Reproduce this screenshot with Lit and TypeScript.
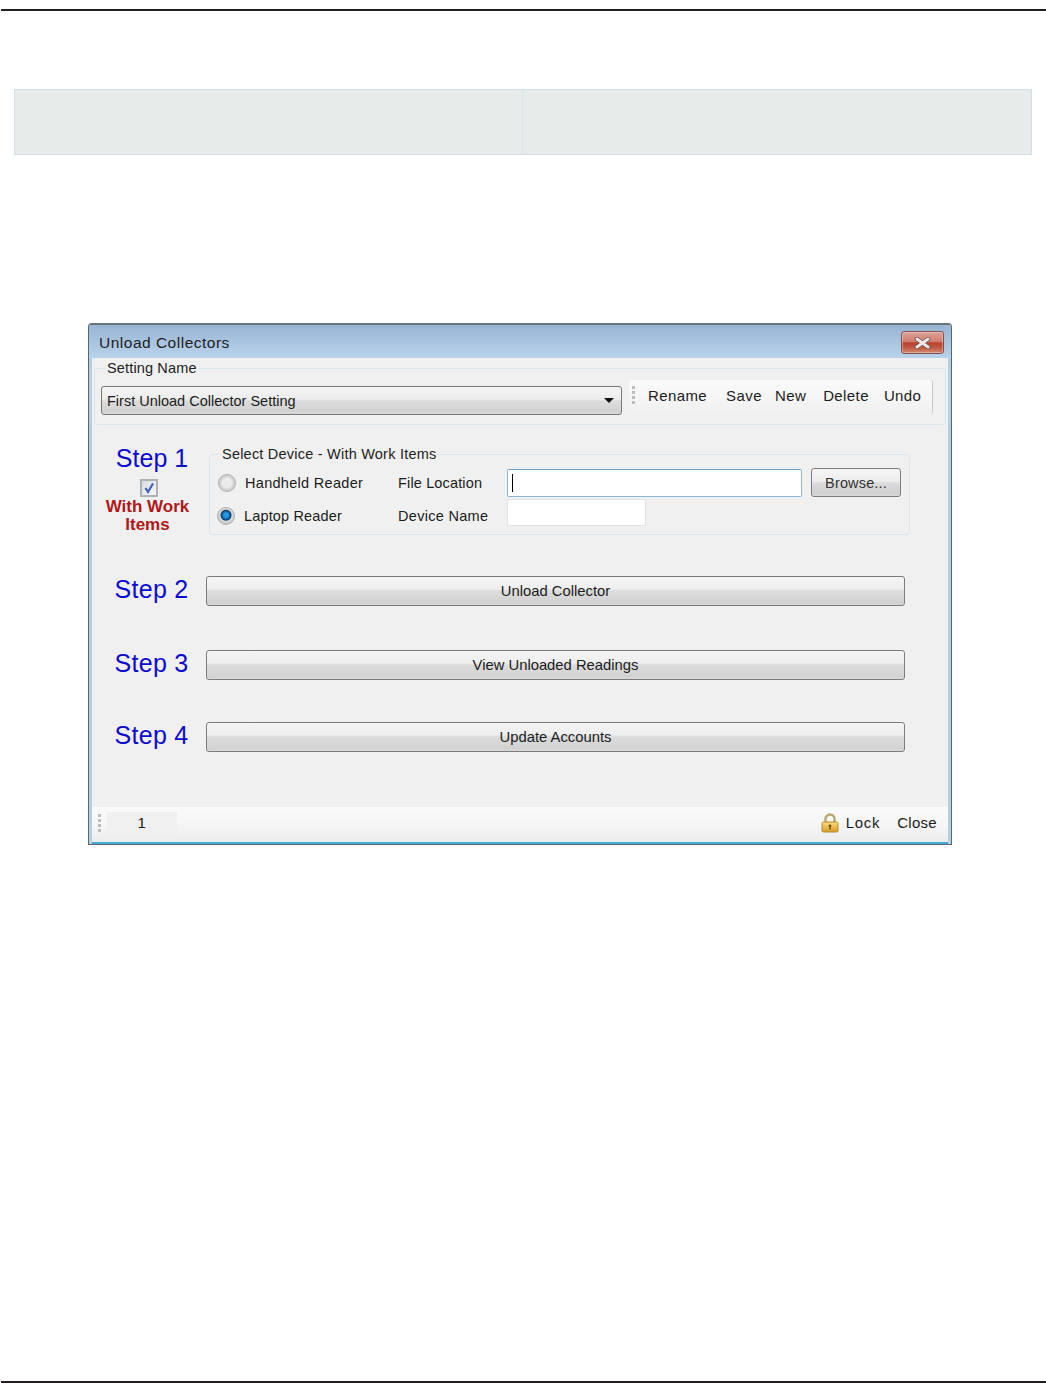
import { LitElement, html, css } from "lit";
import { customElement } from "lit/decorators.js";

@customElement("app-root")
export class AppRoot extends LitElement {
  static styles = css`
    :host { display: block; height: 1383px; background: #fff; overflow: hidden; font-family: "Liberation Sans", Arial, sans-serif; }
    * { box-sizing: border-box; }
    .rule { height: 2px; background: #231f20; margin-left: 1px; }
    .rule.top { margin-top: 9px; }
    .rule.bottom { margin-top: 536px; }
    .table { margin: 78px 0 0 14px; width: 1018px; height: 66px; display: grid; grid-template-columns: 507px 509px; background: #e7ebea; border: 1px solid #cfe0ec; }
    .table div + div { border-left: 1px solid #d6e4ee; }

    .win { margin: 168px 0 0 88px; width: 864px; height: 522px; display: flex; flex-direction: column; background: #f0f0f0; border: 1px solid #5b6570; border-top: 2px solid #6b7580; border-radius: 4px 4px 0 0; color: #1c1c1c; font-size: 14.5px; letter-spacing: 0.15px; box-shadow: inset 3px 0 0 #b4cfe8, inset -3px 0 0 #b4cfe8, inset 0 -2px 0 #3fb0d0; padding: 0 3px 2px; }
    .title { margin: 0 -3px; height: 33px; flex: none; display: flex; align-items: center; justify-content: space-between; padding: 2px 7px 0 10px; background: linear-gradient(#98b4d3, #b9d3eb); font-size: 15.5px; letter-spacing: 0.5px; color: #222; }
    .x { width: 43px; height: 23px; border: 1px solid #84504e; border-radius: 3px; background: linear-gradient(#dfa298 0%, #d0806f 45%, #b9432f 52%, #c05a42 75%, #d28c72 100%); display: flex; align-items: center; justify-content: center; box-shadow: inset 0 0 0 1px rgba(255,255,255,.3); }

    fieldset { margin: 0; min-width: 0; border: 1px solid #dbe5ec; border-radius: 4px; }
    legend { padding: 0 1px; line-height: 18px; color: #222; font-size: 14.5px; }
    .setting { margin: 1px 2px 0 2px; height: 66px; padding: 0 0 0 6px; display: flex; align-items: flex-start; gap: 7px; }
    .setting legend { margin-left: 5px; }
    .combo { width: 521px; height: 29px; margin-top: 9px; flex: none; display: flex; align-items: center; justify-content: space-between; padding: 0 7px 0 5px; border: 1px solid #77797b; border-radius: 3px; background: linear-gradient(#f3f3f3 0%, #ededed 45%, #dcdcdc 52%, #d2d2d2 90%, #dadada 100%); font-size: 14.5px; letter-spacing: 0; }
    .caret { width: 0; height: 0; border: 5px solid transparent; border-top: 5px solid #111; border-bottom: 0; border-left-width: 5.5px; border-right-width: 5.5px; }
    .tools { width: 304px; height: 34px; margin-top: 3px; flex: none; display: flex; align-items: center; padding: 0 0 4px 3px; background: linear-gradient(#fafafa, #f0f0f0); border-right: 1px solid #c8c8c8; border-radius: 3px; letter-spacing: 0.4px; font-size: 15px; }
    .grip { width: 3px; flex: none; display: flex; flex-direction: column; gap: 2px; }
    .grip i { height: 3px; background: #bdbdbd; }
    .tools span { flex: none; }
    .t1 { margin-left: 13px; }
    .t2 { margin-left: 19px; }
    .t3 { margin-left: 13px; }
    .t4 { margin-left: 17px; }
    .t5 { margin-left: 15px; }

    .steps { display: grid; grid-template-columns: 114px 1fr; align-items: center; margin-top: 20px; }
    .step { text-align: center; color: #0a0ad0; font-size: 25px; line-height: 28px; letter-spacing: 0; padding-left: 5px; }
    .step.lift { line-height: 24px; padding-bottom: 4px; letter-spacing: 0.3px; }
    .left { display: flex; flex-direction: column; align-items: center; align-self: start; margin-top: -1px; }
    .check { width: 18px; height: 18px; margin-top: 7px; border: 2px solid #adb0b5; background: linear-gradient(135deg, #d8dce2, #f7f7f9); display: block; }
    .wwi { color: #b01818; font-weight: bold; font-size: 17px; line-height: 18px; text-align: center; letter-spacing: 0; margin: 1px 0 0 -3px; }
    .left .step { padding-left: 6px; }
    .device { width: 701px; height: 90px; padding: 3px 0 0 8px; background: #f0f0f0; display: grid; grid-template-columns: 27px 153px 109px 304px auto; grid-template-rows: 33px 33px; align-items: center; margin-left: 3px; align-content: start; }
    .device legend { margin-left: 3px; letter-spacing: 0.22px; }
    .radio { width: 18px; height: 18px; border-radius: 50%; border: 1px solid #b4b4b4; background: radial-gradient(circle at 50% 50%, #ececec 0 40%, #d6d6d6 55%, #c8c8c8 75%, #e6e6e6 100%); }
    .radio.on { margin-left: -1px; background: radial-gradient(circle at 50% 45%, #2a9ae0 0 18%, #0b5a9a 34%, #0c3f70 42%, #dcdcdc 50%, #bcbcbc 80%, #dedede 100%); }
    .wide { letter-spacing: 0.3px; }
    .nudge { margin-left: -1px; }
    .input { background: #fff; border: 1px solid #dde3e8; border-radius: 2px; height: 27px; display: flex; align-items: center; padding-left: 4px; }
    .input.focus { width: 295px; height: 28px; border-color: #8fb8d8; border-top-color: #6f9fc4; }
    .input.name { width: 139px; align-self: start; margin-top: 0; }
    .cursor { width: 1px; height: 18px; background: #000; }
    .browse { width: 90px; height: 29px; border: 1px solid #7e7e7e; border-radius: 3px; background: linear-gradient(#f4f4f4 0%, #ededed 45%, #dcdcdc 52%, #d0d0d0 90%, #dadada 100%); display: flex; align-items: center; justify-content: center; font-size: 14.5px; color: #333; }
    .big { width: 699px; height: 30px; border: 1px solid #7b7b7b; border-radius: 3px; background: linear-gradient(#f4f4f4 0%, #eeeeee 42%, #dcdcdc 50%, #d2d2d2 90%, #d9d9d9 100%); display: flex; align-items: center; justify-content: center; font-size: 14.8px; letter-spacing: 0; }
    .row-1 { margin-top: 41px; }
    .row-2 { margin-top: 44px; }
    .row-3 { margin-top: 42px; }
    .status { margin-top: auto; height: 35px; flex: none; display: flex; align-items: center; padding: 0 11px 4px 6px; background: linear-gradient(#fafafa 0%, #f6f6f6 50%, #ececec 100%); letter-spacing: 0.7px; font-size: 15px; }
    .page { width: 70px; height: 22px; margin-left: 6px; background: #f0f0f0; display: flex; align-items: center; justify-content: center; }
    .lock { margin-left: auto; display: block; }
    .lock-t { margin: 0 17px 0 7px; }
    .close { letter-spacing: 0.3px; }
  `;

  private grip() {
    return html`<div class="grip"><i></i><i></i><i></i><i></i></div>`;
  }

  render() {
    return html`
      <div class="rule top"></div>
      <div class="table"><div></div><div></div></div>
      <div class="win">
        <div class="title">
          <span>Unload Collectors</span>
          <div class="x">
            <svg width="17" height="12" viewBox="0 0 17 12"><path d="M3 2 L14 10 M14 2 L3 10" stroke="#6a4a4c" stroke-width="4.6" stroke-linecap="round"/><path d="M3 2 L14 10 M14 2 L3 10" stroke="#e9e6e6" stroke-width="3" stroke-linecap="round"/></svg>
          </div>
        </div>
        <fieldset class="setting">
          <legend>Setting Name</legend>
          <div class="combo"><span>First Unload Collector Setting</span><span class="caret"></span></div>
          <div class="tools">
            ${this.grip()}
            <span class="t1">Rename</span>
            <span class="t2">Save</span>
            <span class="t3">New</span>
            <span class="t4">Delete</span>
            <span class="t5">Undo</span>
          </div>
        </fieldset>

        <div class="steps">
          <div class="left">
            <div class="step">Step 1</div>
            <svg class="check" viewBox="0 0 14 14"><path d="M3.500 7 L6 11 L11 2.500" fill="none" stroke="#3f5fb8" stroke-width="2.200"/></svg>
            <div class="wwi">With Work<br />Items</div>
          </div>
          <fieldset class="device">
            <legend>Select Device - With Work Items</legend>
            <div class="radio"></div><span class="wide">Handheld Reader</span><span>File Location</span>
            <div class="input focus"><div class="cursor"></div></div>
            <div class="browse">Browse...</div>
            <div class="radio on"></div><span class="nudge">Laptop Reader</span><span class="wide">Device Name</span>
            <div class="input name"></div>
          </fieldset>

          <div class="step lift row-1">Step 2</div>
          <div class="big row-1">Unload Collector</div>
          <div class="step lift row-2">Step 3</div>
          <div class="big row-2">View Unloaded Readings</div>
          <div class="step lift row-3">Step 4</div>
          <div class="big row-3">Update Accounts</div>
        </div>

        <div class="status">
          ${this.grip()}
          <div class="page">1</div>
          <svg class="lock" width="18" height="20" viewBox="0 0 18 20">
            <path d="M4.500 9V6a4.500 4.500 0 0 1 9 0v3" fill="none" stroke="#b9a66a" stroke-width="2.400"/>
            <defs><linearGradient id="g" x1="0" y1="0" x2="0" y2="1"><stop offset="0" stop-color="#f8de7e"/><stop offset="1" stop-color="#d99a25"/></linearGradient></defs>
            <rect x="1" y="9" width="16" height="10" rx="1.500" fill="url(#g)" stroke="#b5892f"/>
            <path d="M9 11.500a1.400 1.400 0 0 1 .7 2.600V16.500H8.300V14.100A1.400 1.400 0 0 1 9 11.500Z" fill="#6b4a12"/>
          </svg>
          <span class="lock-t">Lock</span>
          <span class="close">Close</span>
        </div>
      </div>
      <div class="rule bottom"></div>
    `;
  }
}
